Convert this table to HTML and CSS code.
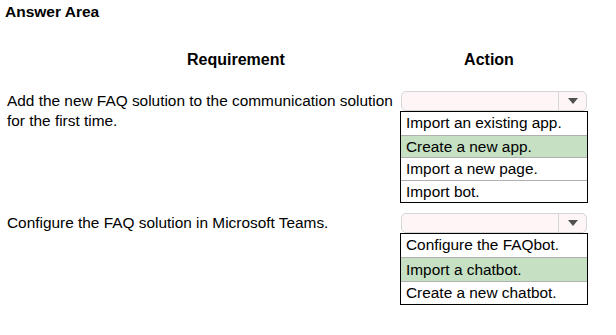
FILE: index.html
```html
<!DOCTYPE html>
<html>
<head>
<meta charset="utf-8">
<link rel="stylesheet" href="styles.css">
</head>
<body>
<div class="page">
  <div class="title">Answer Area</div>
  <div class="heads">
    <div class="head req">Requirement</div>
    <div class="head act">Action</div>
  </div>
  <div class="row first">
    <div class="text">Add the new FAQ solution to the communication solution<br>for the first time.</div>
    <div class="action">
      <div class="select">
        <div class="field"></div>
        <div class="btn"><span class="arrow"></span></div>
      </div>
      <ul class="list">
        <li>Import an existing app.</li>
        <li class="sel">Create a new app.</li>
        <li>Import a new page.</li>
        <li>Import bot.</li>
      </ul>
    </div>
  </div>
  <div class="row second">
    <div class="text">Configure the FAQ solution in Microsoft Teams.</div>
    <div class="action">
      <div class="select">
        <div class="field"></div>
        <div class="btn"><span class="arrow"></span></div>
      </div>
      <ul class="list">
        <li>Configure the FAQbot.</li>
        <li class="sel tall">Import a chatbot.</li>
        <li>Create a new chatbot.</li>
      </ul>
    </div>
  </div>
</div>
</body>
</html>
```
FILE: styles.css
```css
html, body {
  margin: 0;
  padding: 0;
  background: #ffffff;
}
body {
  font-family: "Liberation Sans", Arial, sans-serif;
  color: #000;
  width: 616px;
  height: 335px;
  overflow: hidden;
}
.page {
  padding: 3px 0 0 5px;
}
.title {
  font-weight: bold;
  font-size: 15.5px;
  line-height: 18px;
}
.heads {
  display: grid;
  grid-template-columns: 395px 188px;
  margin-top: 29px;
  font-weight: bold;
  font-size: 16px;
  line-height: 20px;
}
.head.req {
  padding-left: 182px;
}
.head.act {
  text-align: center;
  padding-right: 10px;
}
.row {
  display: grid;
  grid-template-columns: 395px 188px;
  font-size: 15.4px;
}
.row.first {
  margin-top: 21px;
}
.row.second {
  margin-top: 10px;
}
.text {
  padding-left: 2px;
  padding-top: 0;
  line-height: 20px;
}
.select {
  display: flex;
  height: 20px;
  margin-left: 1px;
  width: 186px;
  box-sizing: border-box;
  border: 1px solid #d6d6d6;
  border-radius: 5px;
  background: #fdf5f6;
}
.field {
  flex: 1;
}
.btn {
  width: 27px;
  border-left: 1px solid #d6d6d6;
  display: flex;
  align-items: center;
  justify-content: center;
}
.arrow {
  width: 0;
  height: 0;
  border-left: 5.5px solid transparent;
  border-right: 5.5px solid transparent;
  border-top: 6px solid #505050;
  margin-left: 1px;
}
.list {
  list-style: none;
  margin: 0;
  padding: 0;
  width: 188px;
  box-sizing: border-box;
  border: 1.5px solid #000;
}
.list li {
  height: 22.5px;
  line-height: 22px;
  padding-left: 5px;
  border-top: 1px solid #b0b0b0;
  box-sizing: border-box;
  white-space: nowrap;
}
.list li:first-child {
  border-top: none;
}
.list li.sel {
  background: #c5e0c3;
}
.list li.tall {
  height: 24.5px;
  line-height: 24px;
}
```
